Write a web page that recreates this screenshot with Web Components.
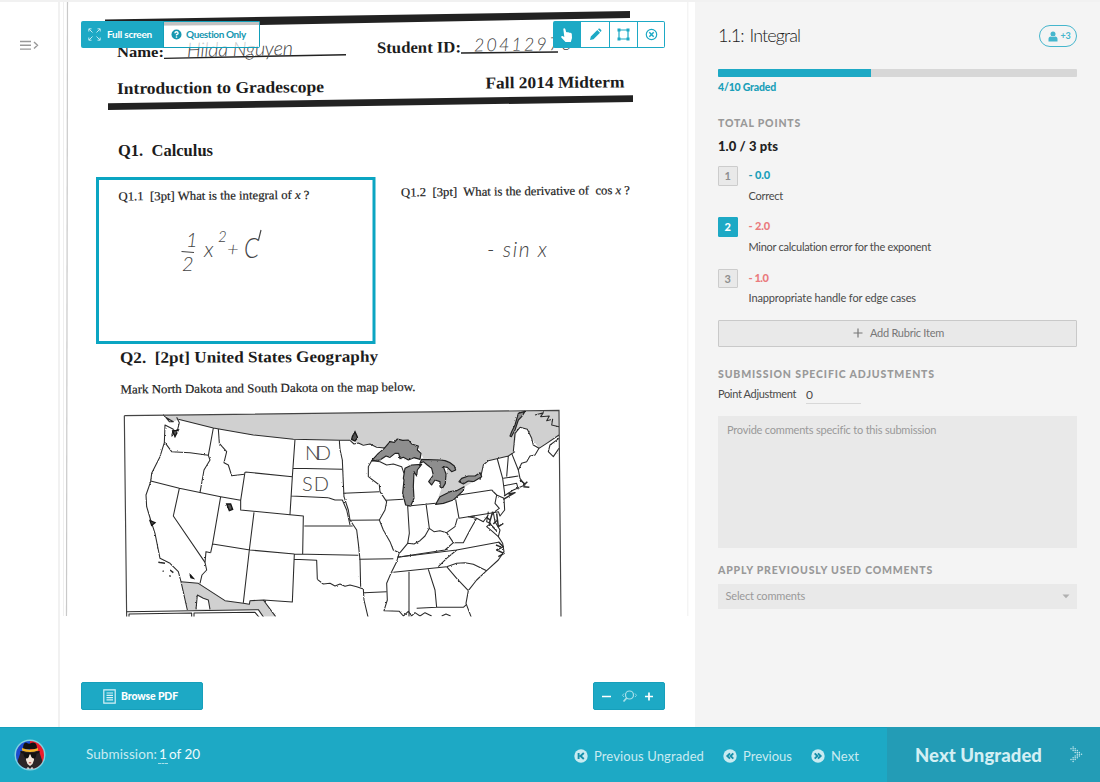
<!DOCTYPE html>
<html lang="en">
<head>
<meta charset="utf-8">
<title>Grading – 1.1: Integral</title>
<style>
html,body{margin:0;height:100%;overflow:hidden}
body{font-family:Lato,"Open Sans",sans-serif;color:#444;background:#fff}
</style>
</head>
<body>
<grade-app></grade-app>
<script>
const define = (name, html, init) => customElements.define(name, class extends HTMLElement {
  connectedCallback() {
    if (this.shadowRoot) return;
    const t = document.createElement('template');
    t.innerHTML = typeof html === 'function' ? html(this) : html;
    this.attachShadow({ mode: 'open' }).appendChild(t.content.cloneNode(true));
    if (init) init(this);
  }
});

/* Text tracked so that it fills the width given in its "w" attribute. */
define('fit-text', '<style>:host{display:inline-block;white-space:pre;flex:none}span{display:inline-block}</style><span><slot></slot></span>', el => {
  const span = el.shadowRoot.querySelector('span');
  const w = +el.getAttribute('w');
  const natural = span.getBoundingClientRect().width;
  span.style.letterSpacing = ((w - natural) / Math.max(1, el.textContent.length)) + 'px';
  el.style.width = w + 'px';
});

define('scanned-page', `
<style>
:host{display:block}
svg{display:block;width:635px;height:727px}
text{font-family:"Liberation Serif",serif;fill:#1c1c1c}
.b{font-weight:700}
.q{font-size:12.4px;stroke:#1c1c1c;stroke-width:.2px}
.hand{font-family:Lato,sans-serif;font-weight:300;font-style:italic;fill:#444}
.l{fill:none;stroke:#2b2b2b;stroke-width:3.2;stroke-linejoin:round}
.lake{fill:#8e8e8e;stroke:#222;stroke-width:3.5;stroke-linejoin:round}
</style>
<svg viewBox="60 0 635 727">
  <defs>
    <clipPath id="c"><rect x="60" y="0" width="640" height="616.5"/></clipPath>
    <filter id="r" x="-5%" y="-5%" width="110%" height="110%" color-interpolation-filters="sRGB"><feTurbulence type="fractalNoise" baseFrequency=".22" numOctaves="2" seed="4"/><feDisplacementMap in="SourceGraphic" scale="6" xChannelSelector="R" yChannelSelector="G"/></filter>
  </defs>
  <path d="M67.500 2L66.500 616" stroke="#c9c9c9" stroke-width="1.200"/>
  <path d="M63.500 2V616M687.800 2V616" stroke="#efefef"/>
  <path d="M105 19.500L630 11V18L260 25L105 26Z" fill="#222"/>
  <path d="M108 103.200L633 95.200V102L108 110Z" fill="#222"/>
  <path d="M164 58.400L346 54.700M461 53L558 52" stroke="#222" stroke-width="1.400"/>
  <text class="b" x="117" y="57" font-size="15.500" textLength="47" lengthAdjust="spacingAndGlyphs">Name:</text>
  <text class="b" x="377" y="53" font-size="16" textLength="84" lengthAdjust="spacingAndGlyphs" transform="rotate(-.4 377 53)">Student ID:</text>
  <text class="b" x="117" y="94" font-size="16.500" textLength="207" lengthAdjust="spacingAndGlyphs" transform="rotate(-.5 117 93)">Introduction to Gradescope</text>
  <text class="b" x="485.500" y="88.500" font-size="16.500" textLength="139" lengthAdjust="spacingAndGlyphs" transform="rotate(-.5 485 88)">Fall 2014 Midterm</text>
  <text class="hand" x="187" y="57" font-size="20" textLength="106" lengthAdjust="spacing" transform="rotate(-1 187 56)">Hilda Nguyen</text>
  <text class="hand" x="474" y="51.500" font-size="18" textLength="98" lengthAdjust="spacing" transform="rotate(-1 474 51)">20412973</text>
  <text class="b" x="118" y="156" font-size="16" textLength="95" lengthAdjust="spacingAndGlyphs" xml:space="preserve">Q1.  Calculus</text>
  <rect x="97.500" y="178.500" width="276.500" height="164" fill="none" stroke="#0ba5c2" stroke-width="3"/>
  <text class="q" x="118.500" y="200.500" textLength="191" lengthAdjust="spacingAndGlyphs" transform="rotate(-.5 118 200)" xml:space="preserve">Q1.1  [3pt] What is the integral of <tspan font-style="italic">x</tspan> ?</text>
  <text class="q" x="401" y="196.500" textLength="229" lengthAdjust="spacingAndGlyphs" transform="rotate(-.6 401 196)" xml:space="preserve">Q1.2  [3pt]  What is the derivative of  cos <tspan font-style="italic">x</tspan> ?</text>
  <g class="hand">
    <text class="hand" x="186" y="247" font-size="20">1</text>
    <path d="M181.500 251.500L194 252.500" stroke="#444" stroke-width="1.200"/>
    <text class="hand" x="182" y="271" font-size="20">2</text>
    <text class="hand" x="204" y="257" font-size="22">x</text>
    <text class="hand" x="218" y="242" font-size="15">2</text>
    <text class="hand" x="227" y="256" font-size="20">+</text>
    <text class="hand" x="244" y="258" font-size="27" textLength="15" lengthAdjust="spacingAndGlyphs">C</text>
    <path d="M261 230L258.500 240" stroke="#444" stroke-width="1.200"/>
    <text class="hand" x="487" y="257" font-size="21" textLength="60">- sin x</text>
  </g>
  <text class="b" x="120" y="363" font-size="16" textLength="258" lengthAdjust="spacingAndGlyphs" transform="rotate(-.3 120 363)" xml:space="preserve">Q2.  [2pt] United States Geography</text>
  <text class="q" x="120.500" y="393.500" textLength="295" lengthAdjust="spacingAndGlyphs" transform="rotate(-.5 120 393)">Mark North Dakota and South Dakota on the map below.</text>
  <g clip-path="url(#c)">
    <g transform="translate(110 370) scale(.33333)">
      <path fill="#d0d0d0" d="M165 136L1347 121V195L1330 205L1310 220L1287 235L1280 225L1265 205L1252 178L1230 172L1220 185L1215 215L1210 245L1195 258L1160 265L1135 272L1120 285L1115 320L1065 350L1035 368L990 385L980 395L995 355L1008 310L1020 275L940 265L925 230L850 210L820 236L790 226L750 222L720 211L690 211L550 208L430 195L310 174L205 148L190 155Z"/>
      <path fill="#d0d0d0" d="M213 635L265 640L345 692L400 700L418 703L420 692L460 690L497 740L460 740L445 720L232 720Z"/>
      <path d="M258 718L262 675L280 685L295 690L300 718Z" fill="#fff"/>
      <path d="M43 137L1347 121L1353 745M43 137L50 745" fill="none" stroke="#444" stroke-width="3.500"/>
      <g class="l">
        <path d="M205 148L310 174L430 195L550 208L690 211H720M310 174L295 256M122 333L208 355L332 380L392 391M406 306L547 320M405 306L392 391V420L540 434L580 438L578 552M555 208L547 320L540 433M208 355L190 438L285 577M332 380L308 520L302 548M308 522L420 540L553 552L745 556M432 427L418 540L400 698M553 552L547 696L460 690L420 692L418 703L400 700L345 692L265 640L213 635M550 295L697 298M545 378L655 383M583 468L728 468M553 568L620 571L622 628M700 370L808 365M720 451L808 450M828 391L880 388M748 568L850 566M762 668L830 665M893 408L898 490L893 520M948 400L958 475M895 408L977 400M1037 388L1047 445L1150 428M1047 375L1145 360M862 562L1040 540L1165 517M850 607L1010 590M897 605V740M955 598L975 660L980 712M920 715L980 712L1060 712L1070 703M1162 267L1178 325L1185 378M1195 258L1190 320M1205 250L1225 300M1180 325L1225 318M1182 347L1220 340L1225 358"/>
        <path d="M50 725L445 719L463 745M57 745V732L245 729V745M252 745V729L435 727L450 745"/>
        <path filter="url(#r)" d="M160 137L190 155L168 143L178 155L190 155M200 142L208 158L200 190L185 198L190 178L165 165L163 218L150 260L125 310L122 335L108 375L110 410L122 450L135 490L145 540L150 565L180 580L205 605L213 635L232 720M165 218L185 245L240 248L295 256L300 270L282 300L270 368M325 177L328 220L350 245L342 278L355 285L365 317L403 313M302 548L288 545L285 577L290 600L276 615L270 640M460 690L497 740M655 383L675 390L697 390L710 420L720 465M688 211L690 238L697 270L700 340L702 380L715 420L720 450L740 480L745 520L750 570L752 650M622 628L640 642L660 640L675 648L690 642L705 649L720 645L740 650L760 657L762 690L775 745M720 211L732 222L745 219L760 226L780 222L800 232L850 236M785 272L775 290L775 320L808 345L810 365L830 395L825 420L808 450L820 480L840 515L850 540L868 548L860 575L845 605L830 640L832 690L822 722L868 724L880 738L895 724L905 738L915 728L930 738L945 728L965 738M995 738L1008 732L1022 738M870 548L893 520L912 522L930 512L945 498L958 475L972 485L990 482L1010 488L1030 518L1060 518L1080 480L1100 445L1075 440L1095 438M1042 445L1035 470L1010 488M1030 518L1005 540L862 562M1040 540L1010 565L985 590M1010 590L1040 580L1065 578L1090 583L1130 602M1010 590L1040 625L1075 662M1100 445L1120 455L1135 435M785 272L810 275L830 285L850 282L875 290L882 310M1145 360L1160 375L1182 385L1184 420L1170 438L1165 425L1150 428L1155 455L1170 480L1165 500L1178 520L1182 545L1165 570L1130 602L1100 630L1075 662L1068 700L1085 745M1160 375L1155 400L1168 415L1150 428M1135 425L1130 455L1142 460L1130 470L1148 485L1165 500M1215 245L1195 258L1135 272L1120 285L1110 330M1230 172L1215 190L1210 245M1230 172L1252 178L1265 205L1270 225L1287 235L1275 255L1260 258L1250 275L1235 280L1225 300L1230 325L1245 345L1210 360L1182 378M1287 235L1310 220L1347 195M1347 205L1320 225L1315 245L1330 260L1347 235M1275 135L1300 128L1292 140L1318 138L1310 152L1328 148L1325 165L1347 170M258 718L262 675L280 685L295 690L300 718"/>
        <path filter="url(#r)" d="M1165 515L1180 530L1160 540L1182 550L1165 560M1170 530L1158 525M1148 425L1138 460L1160 482M1140 450L1130 442M1160 430L1165 470L1180 460M1162 450L1150 462M1230 330L1245 342L1252 335M1240 350L1258 352M1180 388L1215 368L1195 372M145 577L165 580M180 600L190 608" stroke-width="4.500"/>
      </g>
      <path d="M188 183L205 180L195 200ZM350 402L362 402L368 418L358 422ZM120 452L135 458L125 466ZM240 613L250 625L243 623ZM727 200L735 185L743 203L735 213L725 208ZM158 603l3 1M178 617l4 2" filter="url(#r)" fill="#555" stroke="#151515" stroke-width="4"/>
      <g class="lake" filter="url(#r)">
        <path d="M785 272L805 250L822 236L840 215L853 217L862 207L878 211L895 210L905 222L925 228L922 240L933 250L930 268L912 263L895 270L880 262L870 266L866 250L855 250L840 262L828 258L810 270Z"/>
        <path d="M880 325L885 295L905 285L935 283L922 300L920 318L912 305L910 350L912 385L902 408L887 405L878 370L882 330Z"/>
        <path d="M930 280L940 275L952 285L965 295L970 315L956 335L965 345L975 330L990 335L990 350L997 355L1006 340L1008 312L1000 290L1012 292L1025 305L1037 300L1033 288L1020 278L1005 272L990 270L935 268Z"/>
        <path d="M977 403L990 380L1020 365L1040 362L1062 350L1060 362L1030 390L1000 400Z"/>
        <path d="M1047 335L1055 325L1075 318L1095 318L1110 308L1115 320L1090 335L1075 333L1060 342Z"/>
        <path d="M1200 198L1205 185L1215 165L1225 130L1245 124L1235 140L1225 150L1215 180L1204 200Z"/>
      </g>
    </g>
    <text class="hand" x="305" y="460" font-size="20" textLength="26" style="font-style:normal">ND</text>
    <text class="hand" x="302" y="491" font-size="20" textLength="27" style="font-style:normal">SD</text>
  </g>
</svg>`);

define('view-tabs', `
<style>
:host{display:flex;height:27px;border-radius:2px;overflow:hidden;color:#fff;font-size:10px;font-weight:700;line-height:12px}
div{display:flex;align-items:center;box-sizing:border-box}
fit-text{margin-bottom:2px}
.f{width:82px;background:#1da9c5;padding-left:7px;gap:6px}
.q{width:97px;border:1.5px solid #119fba;background:rgba(255,255,255,.72);color:#1597b0;padding-left:7px;gap:4px}
svg{flex:none}
</style>
<div class="f"><svg width="13" height="13" viewBox="0 0 13 13" fill="none" stroke="#bfe8f0" stroke-width="1"><path d="M.8 3.500V.8H3.500M1 1L4.500 4.500M9.500.8H12.200V3.500M12 1L8.500 4.500M.8 9.500V12.200H3.500M1 12L4.500 8.500M12.200 9.500V12.200H9.500M12 12L8.500 8.500"/></svg><fit-text w="45">Full screen</fit-text></div>
<div class="q"><svg width="11" height="11" viewBox="0 0 11 11"><circle cx="5.500" cy="5.500" r="5" fill="#1597b0"/><path d="M3.900 4.300Q4 2.800 5.500 2.800T7.100 4.200Q7.100 5 5.500 5.700V6.400" fill="none" stroke="#fff" stroke-width="1.400"/><circle cx="5.500" cy="8" r=".85" fill="#fff"/></svg><fit-text w="60">Question Only</fit-text></div>`);

define('tool-bar', `
<style>
:host{display:grid;grid-template-columns:28px 29px 28px 27px;height:27px;box-sizing:border-box;color:#1da9c5}
div{display:grid;place-items:center;background:#fff;border:solid #1da9c5;border-width:1.5px 1.5px 1.5px 0}
.on{background:#1da9c5;border-radius:2px 0 0 2px}
div:last-child{border-radius:0 2px 2px 0}
svg{display:block}
</style>
<div class="on"><svg width="14" height="16" viewBox="0 0 14 16"><path fill="#fff" d="M3.300 1.700Q4.500 .7 5.300 1.900L6.200 5.300Q7.200 4.700 8 5.500Q9 4.900 9.800 5.900Q11.200 5.500 11.800 7L12 11L10.800 15H5.500L1.300 10.400Q.8 9 2.500 9.100L4.300 10Z"/></svg></div>
<div><svg width="13" height="13" viewBox="0 0 13 13" fill="#1da9c5"><path d="M1 12L1.800 8.500L8.300 2L11 4.700L4.500 11.200ZM9 1.300L9.800.6Q10.500.2 11.200.9L12.200 1.900Q12.700 2.600 12.200 3.200L11.600 3.900Z"/></svg></div>
<div><svg width="13" height="13" viewBox="0 0 13 13"><path d="M2 2H11V11H2Z" fill="none" stroke="#1da9c5" stroke-width="1.200"/><path d="M.5.5h3v3h-3ZM9.500.5h3v3h-3ZM.5 9.500h3v3h-3ZM9.500 9.500h3v3h-3Z" fill="#1da9c5"/></svg></div>
<div><svg width="13" height="13" viewBox="0 0 13 13" fill="none" stroke="#1da9c5"><circle cx="6.500" cy="6.500" r="5.200" stroke-width="1.200"/><path d="M4.300 4.300L8.700 8.700M8.700 4.300L4.300 8.700" stroke-width="1.500"/></svg></div>`);

define('browse-pdf', `
<style>:host{display:flex;align-items:center;box-sizing:border-box;width:121.500px;height:28px;padding-left:21px;gap:5px;background:#1da9c5;border:1px solid #169fbb;border-radius:2px;color:#fff;font-size:10.5px;font-weight:900}</style>
<svg width="13" height="15" viewBox="0 0 13 15" fill="none" stroke="#d8f1f6" stroke-width="1.200"><path d="M.8.8H12.200V14.200H.8ZM3.500 4H10M3.500 6.300H10M3.500 8.600H10M3.500 10.900H10"/></svg><fit-text w="57">Browse PDF</fit-text>`);

define('zoom-control', `
<style>:host{display:block;box-sizing:border-box;width:72px;height:28px;background:#1da9c5;border:1px solid #169fbb;border-radius:2px}svg{display:block}</style>
<svg width="70" height="26" viewBox="0 0 70 26" fill="none"><path d="M8 13.500H17M51 13.500H59M55 9.500V17.500" stroke="#fff" stroke-width="1.700"/><g stroke="#a9e0ea"><circle cx="35.500" cy="12" r="4" stroke-width="1.200"/><path d="M32.700 15L29.500 18.500" stroke-width="1.700"/><path d="M30 10.500L28.500 12.300L30 14M41 10.500L42.500 12.300L41 14" stroke-width=".8"/></g></svg>`);

define('side-rail', `
<style>:host{display:block;box-sizing:border-box;border-right:2px solid #f1f1f1;padding:40px 0 0 20px}svg{display:block}</style>
<svg width="19" height="11" viewBox="0 0 19 11" fill="none" stroke="#999" stroke-width="1.400"><path d="M0 1.500H11M0 5.300H11M0 9.100H11M14 2L17.500 5.300L14 8.600"/></svg>`);

define('doc-viewer', `
<style>
:host{display:block;position:relative;background:#fff}
view-tabs{position:absolute;left:21px;top:21px}
tool-bar{position:absolute;left:493px;top:21px}
browse-pdf{position:absolute;left:21px;top:682px}
zoom-control{position:absolute;left:533px;top:682px}
</style>
<scanned-page></scanned-page><view-tabs></view-tabs><tool-bar></tool-bar><browse-pdf></browse-pdf><zoom-control></zoom-control>`);

define('rubric-item', el => `
<style>
:host{display:grid;grid-template-columns:20px 1fr;column-gap:10.500px;height:51.300px;align-items:start;font-size:11px;line-height:16px}
.k{box-sizing:border-box;width:19.500px;height:19.500px;border:1px solid #ccc;border-radius:1px;background:#e9e9e9;color:#8e8e8e;font-weight:700;text-align:center;line-height:18px}
:host([on]) .k{background:#1da9c5;border-color:#1da9c5;color:#fff;font-weight:900}
.t{padding-top:1px}
.p{font-weight:900;color:#ea7b7d;height:20.500px}
:host([good]) .p{color:#1a9fb9}
.d{color:#4a4a4a}
</style>
<div class="k">${el.getAttribute('key')}</div>
<div class="t"><div class="p"><fit-text w="${el.getAttribute('pw')}">${el.getAttribute('points')}</fit-text></div><div class="d"><slot></slot></div></div>`);

define('section-title', `<style>:host{display:block;font-size:10.500px;font-weight:900;line-height:16px;color:#999}</style><slot></slot>`);

define('progress-bar', `<style>:host{display:block;height:8px;background:#d7d7d7;border-radius:1px;overflow:hidden}div{width:153px;height:8px;background:#1da9c5}</style><div></div>`);

define('grading-panel', `
<style>
:host{display:flex;flex-direction:column;box-sizing:border-box;background:#f4f4f4;padding:25px 23px 0;font-size:11px;line-height:16px}
header{display:flex;justify-content:space-between;height:22px;margin-bottom:22px}
h1{margin:0;font-size:18px;font-weight:300;line-height:20px;color:#222;word-spacing:2px}
.pill{box-sizing:border-box;display:flex;align-items:center;width:38.500px;height:22px;padding-left:8px;gap:3px;border:1px solid #45b6cd;border-radius:11px;color:#45b6cd;font-size:9px;font-weight:700}
.g{margin-top:2px;height:16px;color:#1a9fb9;font-weight:900;font-size:10.500px}
.tp{margin-top:20px}
.pts{margin:6px 0 11px;height:18px;line-height:18px;font-size:13px;font-weight:900;color:#222}
.add{box-sizing:border-box;height:27px;display:flex;align-items:center;justify-content:center;gap:7px;padding-left:2px;border:1px solid #c9c9c9;border-radius:1px;background:#e9e9e9;color:#777}
.sa{margin-top:19px}
.row{display:flex;gap:10px;height:18px;margin-top:4.500px;color:#4a4a4a}
.v{width:55px;border-bottom:1px solid #d8d8d8;line-height:17px;font-size:12px}
.ta{box-sizing:border-box;height:132px;margin-top:11.500px;padding:6px 9px;background:#e9e9e9;color:#999}
.ap{margin-top:14px}
.sel{box-sizing:border-box;height:25px;margin-top:6px;padding:0 7.500px;display:flex;align-items:center;justify-content:space-between;background:#e9e9e9;color:#999}
</style>
<header><h1><fit-text w="82">1.1: Integral</fit-text></h1><div class="pill"><svg width="10" height="11" viewBox="0 0 10 11" fill="#45b6cd"><circle cx="5" cy="3" r="2.500"/><path d="M.5 10.500V8Q.5 5.500 3 5.500Q5 6.700 7 5.500Q9.500 5.500 9.500 8V10.500Z"/></svg><fit-text w="10">+3</fit-text></div></header>
<progress-bar></progress-bar>
<div class="g"><fit-text w="58">4/10 Graded</fit-text></div>
<section-title class="tp"><fit-text w="83">TOTAL POINTS</fit-text></section-title>
<div class="pts"><fit-text w="60">1.0 / 3 pts</fit-text></div>
<rubric-item key="1" points="- 0.0" pw="21.5" good><fit-text w="34.5">Correct</fit-text></rubric-item>
<rubric-item key="2" points="- 2.0" pw="21.5" on><fit-text w="182.5">Minor calculation error for the exponent</fit-text></rubric-item>
<rubric-item key="3" points="- 1.0" pw="20"><fit-text w="167.5">Inappropriate handle for edge cases</fit-text></rubric-item>
<div class="add"><svg width="10" height="10" viewBox="0 0 10 10" stroke="#777" stroke-width="1.200"><path d="M5 .5V9.500M.5 5H9.500"/></svg><fit-text w="74">Add Rubric Item</fit-text></div>
<section-title class="sa"><fit-text w="217">SUBMISSION SPECIFIC ADJUSTMENTS</fit-text></section-title>
<div class="row"><fit-text w="78">Point Adjustment</fit-text><div class="v">0</div></div>
<div class="ta"><fit-text w="209">Provide comments specific to this submission</fit-text></div>
<section-title class="ap"><fit-text w="215">APPLY PREVIOUSLY USED COMMENTS</fit-text></section-title>
<div class="sel"><fit-text w="79.5">Select comments</fit-text><svg width="8" height="5" viewBox="0 0 8 5"><path d="M.5.5H7.500L4 4.200Z" fill="#b0b0b0"/></svg></div>`);

define('user-avatar', `
<style>:host{display:block}svg{display:block}</style>
<svg width="32" height="32" viewBox="0 0 32 32"><defs><clipPath id="a"><circle cx="16" cy="16" r="14"/></clipPath></defs>
<circle cx="16" cy="16" r="15.500" fill="#82d1df"/><g clip-path="url(#a)"><path d="M0 0H16V32H0Z" fill="#1d4bd0"/><path d="M16 0H32V32H16Z" fill="#ec1c2c"/>
<path d="M7 12H25L29 24L25 32H7L3 24Z" fill="#2c2426"/><path d="M12 15H20V21L18.500 25L16 27L13.500 25L12 21Z" fill="#f4e6da"/><path d="M9 10Q9 3.500 12 3.500Q14 5 16 4.500Q19 3 21 4Q23 5 23 10Z" fill="#151112"/><path d="M8 9Q16 12.500 24 9V11.500Q16 14.500 8 11.500Z" fill="#f0b32a"/><path d="M6 12Q16 16 26 12L25 14Q16 17 7 14Z" fill="#151112"/><path d="M9.500 15H15.500Q15 19.500 12.500 19.500Q10 19 9.500 15ZM16.500 15H22.500Q22 19.500 19.500 19.500Q17 19 16.500 15Z" fill="#111"/><path d="M14.800 23.800H17.200" stroke="#a33" stroke-width="1"/><path d="M10 32L14 28L16 30L18 28L22 32Z" fill="#eee"/></g></svg>`);

const discs = {
  first: 'M4.600 4V10M9.800 4L6.500 7L9.800 10',
  prev: 'M7 4.300L4.300 7L7 9.700M10.300 4.300L7.600 7L10.300 9.700',
  next: 'M3.700 4.300L6.400 7L3.700 9.700M7 4.300L9.700 7L7 9.700'
};
define('nav-button', el => `
<style>:host{display:flex;align-items:center;gap:6px;color:#c9ebf1;font-size:13px;line-height:18px}svg{display:block}</style>
<svg width="14" height="14" viewBox="0 0 14 14"><circle cx="7" cy="7" r="6.700" fill="#c9ebf1"/><path d="${discs[el.getAttribute('icon')]}" fill="none" stroke="#168fa9" stroke-width="1.900"/></svg><slot></slot>`);

define('next-ungraded', () => {
  const dots = [[2,0],[0,1],[2,1],[4,1],[2,2],[4,2],[6,2],[4,3],[6,3],[8,3],[6,4],[8,4],[10,4],[4,5],[6,5],[8,5],[2,6],[4,6],[6,6],[0,7],[2,7],[4,7],[2,8]]
    .map(([x, y]) => `<circle cx="${x * 1.050 + 1}" cy="${y * 1.800 + 1}" r=".75"/>`).join('');
  return `<style>:host{display:flex;align-items:center;box-sizing:border-box;width:213px;height:55px;padding-left:28px;background:#239cb6;color:#d3eff4;font-size:18.500px;font-weight:900}svg{margin-left:28px}</style>
<fit-text w="127">Next Ungraded</fit-text><svg width="14" height="17" fill="#bfe5ec">${dots}</svg>`;
});

define('grade-footer', `
<style>
:host{display:flex;align-items:center;height:55px;background:#1da9c5;box-shadow:inset 0 1px #14a0bd;color:#c9ebf1;font-size:13.500px;line-height:18px}
user-avatar{margin-left:14px}
.s{display:flex;margin-left:40px;margin-right:auto}
.n{border-bottom:1px dashed #a6dfe9;width:10px;text-align:center;margin:0 1px 0 1px}
.s b{font-weight:400;color:#edfafc}
nav{display:flex;padding-top:3px;gap:19px;margin-right:28px}
</style>
<user-avatar></user-avatar>
<div class="s"><fit-text w="71">Submission:</fit-text><b class="n">1</b><b><fit-text w="31">of 20</fit-text></b></div>
<nav><nav-button icon="first"><fit-text w="110">Previous Ungraded</fit-text></nav-button><nav-button icon="prev"><fit-text w="49">Previous</fit-text></nav-button><nav-button icon="next"><fit-text w="28">Next</fit-text></nav-button></nav>
<next-ungraded></next-ungraded>`);

define('grade-app', `
<style>
:host{display:grid;grid-template:727px 55px / 60px 635px 405px;width:1100px;height:782px;overflow:hidden;position:relative}
:host::before{content:"";position:absolute;z-index:2;left:0;top:0;width:1100px;height:2px;background:#f1f1f1}
grade-footer{grid-column:1/-1}
</style>
<side-rail></side-rail><doc-viewer></doc-viewer><grading-panel></grading-panel><grade-footer></grade-footer>`);
</script>
</body>
</html>
